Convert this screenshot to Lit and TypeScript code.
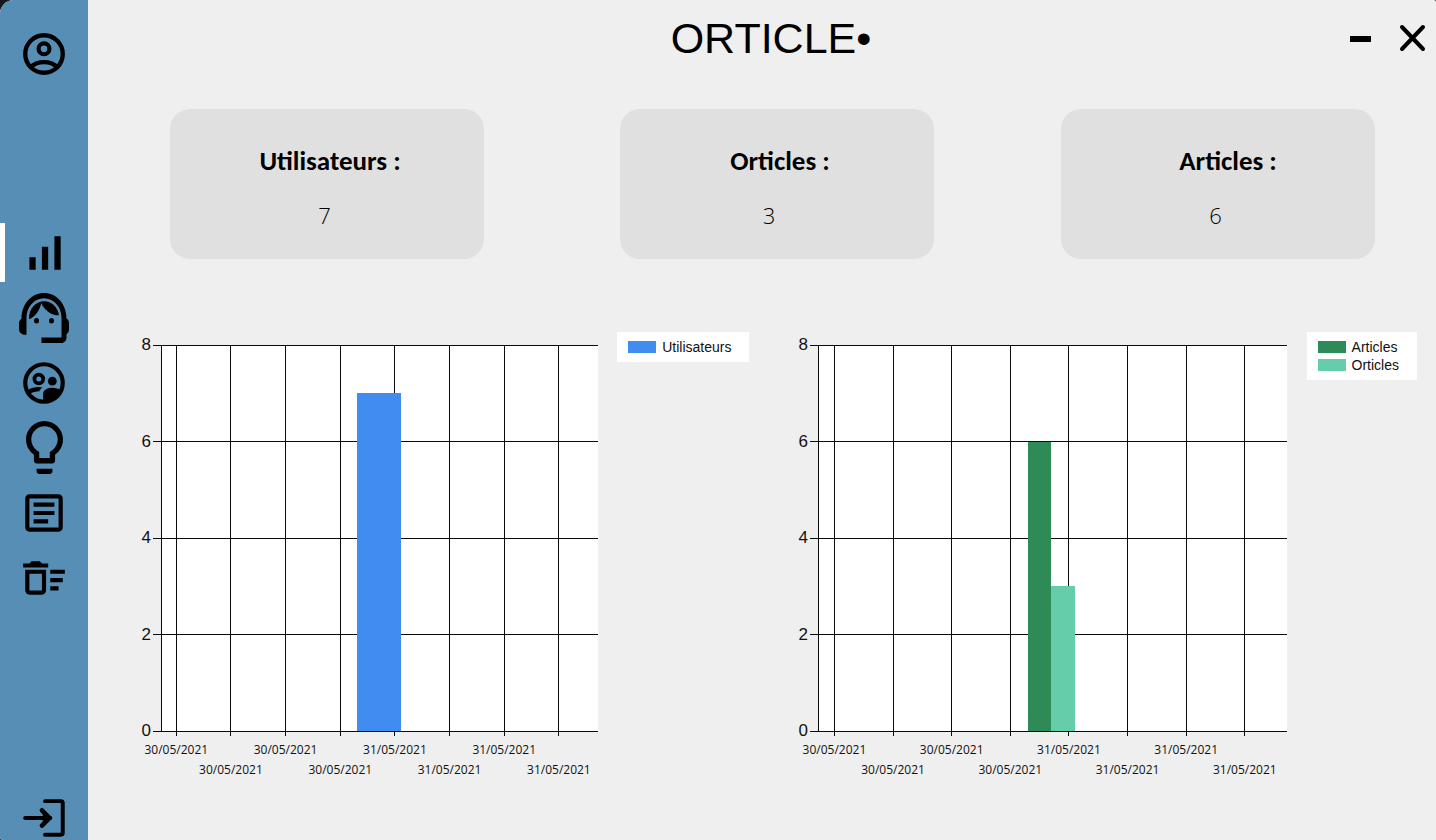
import { LitElement, html, svg, css, nothing } from "lit";
import { customElement, property, state } from "lit/decorators.js";
import { classMap } from "lit/directives/class-map.js";

interface Series {
  name: string;
  color: string;
  value: number;
}

const DATES = [
  "30/05/2021", "30/05/2021", "30/05/2021", "30/05/2021",
  "31/05/2021", "31/05/2021", "31/05/2021", "31/05/2021",
];

const ICONS = {
  account: svg`
    <circle cx="12" cy="12" r="9" fill="none" stroke="currentColor" stroke-width="2.1"/>
    <circle cx="12" cy="9.5" r="2.6" fill="none" stroke="currentColor" stroke-width="2"/>
    <path d="M5.6 18.2C7.3 16.7 9.5 15.9 12 15.9s4.7 .8 6.4 2.3" fill="none" stroke="currentColor" stroke-width="2"/>`,
  stats: svg`<path d="M17 4h3v16h-3zM5 14h3v6H5zm6-5h3v11h-3z"/>`,
  support: svg`
    <path d="M21 12.22C21 6.73 16.74 3 12 3c-4.69 0-9 3.65-9 9.28C2.4 12.62 2 13.26 2 14v2c0 1.1.9 2 2 2h1v-6.1c0-3.87 3.13-7 7-7s7 3.13 7 7V19h-8v2h8c1.1 0 2-.9 2-2v-1.22c.59-.31 1-.92 1-1.64v-2.3c0-.7-.41-1.31-1-1.62z"/>
    <circle cx="9" cy="13" r="1"/><circle cx="15" cy="13" r="1"/>
    <path d="M18 11.03C17.52 8.18 15.04 6 12.05 6c-3.03 0-6.29 2.51-6.03 6.45 2.47-1.01 4.33-3.21 4.86-5.89 1.31 2.63 4 4.44 7.12 4.47z"/>`,
  users: svg`
    <circle cx="12" cy="12" r="9" fill="none" stroke="currentColor" stroke-width="2"/>
    <circle cx="9.5" cy="10.1" r="2.1" fill="none" stroke="currentColor" stroke-width="1.8"/>
    <circle cx="16" cy="11.1" r="2.1"/>
    <path d="M4 15.6C5.7 14.3 7.6 13.9 9.6 13.9c.6 0 1.1.1 1.7.2-.8.5-1.3 1.1-1.6 1.8-1.6 0-3.2.4-4.5 1.4z"/>
    <path d="M11.6 21v-3.9c0-1.9 2.5-2.8 4.4-2.8 1.5 0 3.2.4 4.3 1.2-1.4 3.1-4.5 5.5-8.7 5.5z"/>`,
  idea: svg`<path d="M9 21c0 .55.45 1 1 1h4c.55 0 1-.45 1-1v-1H9v1zm3-19C8.14 2 5 5.14 5 9c0 2.38 1.19 4.47 3 5.74V17c0 .55.45 1 1 1h6c.55 0 1-.45 1-1v-2.26c1.81-1.27 3-3.36 3-5.74 0-3.86-3.14-7-7-7zm2.85 11.1l-.85.6V16h-4v-2.3l-.85-.6C7.8 12.16 7 10.63 7 9c0-2.76 2.24-5 5-5s5 2.24 5 5c0 1.63-.8 3.16-2.15 4.1z"/>`,
  article: svg`<path d="M19 5v14H5V5h14m0-2H5c-1.1 0-2 .9-2 2v14c0 1.1.9 2 2 2h14c1.1 0 2-.9 2-2V5c0-1.1-.9-2-2-2zM14 17H7v-2h7v2zm3-4H7v-2h10v2zm0-4H7V7h10v2z"/>`,
  trash: svg`<path d="M15 16h4v2h-4zm0-8h7v2h-7zm0 4h6v2h-6zM3 18c0 1.1.9 2 2 2h6c1.1 0 2-.9 2-2V8H3v10zm2-8h6v8H5v-8zm5-6H6L5 5H2v2h12V5h-3z"/>`,
  logout: svg`
    <path d="M12.5 3.9h7.6q.9 0 .9.9v14.3q0 .9-.9.9h-7.6" fill="none" stroke="currentColor" stroke-width="1.9" stroke-linecap="round"/>
    <path d="M3 12h12" fill="none" stroke="currentColor" stroke-width="2" stroke-linecap="round"/>
    <path d="M11 8.3l3.7 3.7-3.7 3.7" fill="none" stroke="currentColor" stroke-width="2.2" stroke-linecap="round" stroke-linejoin="round"/>
    <path d="M11.4 8.8l3.2 3.2-3.2 3.2z"/>`,
};

@customElement("orticle-sidebar")
class OrticleSidebar extends LitElement {
  @state() private active = "Statistiques";

  static styles = css`
    :host {
      display: flex;
      flex-direction: column;
      box-sizing: border-box;
      padding-top: 21px;
      background: #568eb6;
      color: #000;
    }
    .item {
      display: flex;
      align-items: center;
      justify-content: center;
      box-sizing: border-box;
      width: 100%;
      height: 65px;
      padding: 0;
      border: 0;
      background: none;
      color: inherit;
      cursor: pointer;
    }
    .menu {
      margin-top: 134px;
    }
    .slot {
      display: grid;
      grid-template-columns: 5px 1fr 5px;
      align-items: center;
    }
    .marker {
      height: 59px;
    }
    .marker.on {
      background: #fff;
    }
    .exit {
      height: 44px;
      margin-top: auto;
    }
    svg {
      display: block;
      flex: none;
      width: 50px;
      height: 50px;
      fill: currentColor;
    }
    .idea {
      width: 37px;
      height: 53px;
    }
  `;

  private menu = [
    { label: "Statistiques", icon: ICONS.stats, box: "0 0 24 24", kind: "" },
    { label: "Support", icon: ICONS.support, box: "2 3 20 18", kind: "" },
    { label: "Utilisateurs", icon: ICONS.users, box: "0 0 24 24", kind: "" },
    { label: "Orticles", icon: ICONS.idea, box: "5 2 14 20", kind: "idea" },
    { label: "Articles", icon: ICONS.article, box: "0 0 24 24", kind: "" },
    { label: "Corbeille", icon: ICONS.trash, box: "0 0 24 24", kind: "" },
  ];

  render() {
    return html`
      <button class="item" aria-label="Compte"><svg viewBox="0 0 24 24">${ICONS.account}</svg></button>
      <nav class="menu">
        ${this.menu.map(
          (m) => html`<div class="slot">
            <span class=${classMap({ marker: true, on: m.label === this.active })}></span>
            <button class="item" aria-label=${m.label} @click=${() => (this.active = m.label)}>
              <svg class=${m.kind || nothing} viewBox=${m.box} preserveAspectRatio="none">${m.icon}</svg>
            </button>
          </div>`
        )}
      </nav>
      <button class="item exit" aria-label="Déconnexion"><svg viewBox="0 0 24 24">${ICONS.logout}</svg></button>
    `;
  }
}

@customElement("orticle-chart")
class OrticleChart extends LitElement {
  @property({ attribute: false }) series: Series[] = [];
  @property({ type: Number }) first = 0;
  @property({ type: Number }) step = 0;
  @property({ type: Number }) barStart = 0;
  @property({ type: Number }) barWidth = 0;

  static styles = css`
    :host {
      display: flex;
      align-items: flex-start;
      gap: 19px;
      min-width: 0;
      color: #111;
    }
    .plot {
      flex: 1;
      min-width: 0;
      height: 386px;
      margin: 13px 0 48px 20px;
      overflow: visible;
    }
    .area {
      fill: #fff;
    }
    .line {
      stroke: #0a0a0a;
      stroke-width: 1;
      shape-rendering: crispEdges;
    }
    .bar {
      shape-rendering: crispEdges;
    }
    .value {
      font: 17px "Liberation Sans", Arial, sans-serif;
      text-anchor: end;
      fill: currentColor;
    }
    .date {
      font: 12px "Open Sans", "Noto Sans", sans-serif;
      text-anchor: middle;
      fill: currentColor;
    }
    .legend {
      display: flex;
      flex-direction: column;
      box-sizing: border-box;
      margin: 0;
      padding: 6px 18px 6px 11px;
      list-style: none;
      background: #fff;
      font: 14px/18px "Liberation Sans", Arial, sans-serif;
    }
    .entry {
      display: flex;
      align-items: center;
      gap: 6px;
    }
    .swatch {
      width: 28px;
      height: 12px;
    }
  `;

  render() {
    const height = 386;
    const max = 8;
    const y = (v: number) => height - (v * height) / max;
    const x = (i: number) => this.first + i * this.step;
    return html`
      <svg class="plot" role="img" aria-label=${this.series.map((s) => s.name).join(", ")}>
        <rect class="area" width="100%" height=${height}></rect>
        ${DATES.map((_, i) => svg`<line class="line" x1="${x(i)}%" x2="${x(i)}%" y1="0" y2=${height + 5}></line>`)}
        ${[0, 2, 4, 6, 8].map(
          (v) => svg`
            <line class="line" x1="-8" x2="100%" y1=${y(v)} y2=${y(v)}></line>
            <text class="value" x="-10" y=${y(v) + 5}>${v}</text>`
        )}
        <line class="line" x1="0" x2="0" y1="0" y2=${height}></line>
        ${this.series.map(
          (s, i) => svg`<rect class="bar" x="${this.barStart + i * this.barWidth}%" y=${y(s.value)}
            width="${this.barWidth}%" height=${height - y(s.value)} fill=${s.color}></rect>`
        )}
        ${DATES.map((d, i) => svg`<text class="date" x="${x(i)}%" y=${height + (i % 2 ? 43 : 23)}>${d}</text>`)}
      </svg>
      <ul class="legend">
        ${this.series.map(
          (s) => html`<li class="entry"><span class="swatch" style="background:${s.color}"></span>${s.name}</li>`
        )}
      </ul>
    `;
  }
}

@customElement("app-root")
class AppRoot extends LitElement {
  static styles = css`
    :host {
      display: block;
      background: #17181c;
      color: #000;
    }
    .window {
      display: grid;
      grid-template-columns: 88px minmax(0, 1fr);
      min-height: 100vh;
      overflow: hidden;
      border-radius: 14px 2px 0 3px;
      background: #efefef;
    }
    .header {
      display: grid;
      grid-template-columns: 1fr auto 1fr;
      align-items: center;
      height: 75px;
      padding: 0 10px 0 28px;
    }
    .title {
      grid-column: 2;
      margin: 0;
      font: 43px/48px "Liberation Sans", Arial, sans-serif;
    }
    .controls {
      display: flex;
      justify-content: flex-end;
      gap: 24px;
    }
    .control {
      display: flex;
      padding: 0;
      border: 0;
      background: none;
      color: inherit;
      cursor: pointer;
    }
    .glyph {
      width: 28px;
      height: 28px;
      fill: none;
      stroke: currentColor;
    }
    .cards {
      display: grid;
      grid-template-columns: 314fr 136fr 314fr 127fr 314fr;
      padding: 34px 61px 0 82px;
    }
    .card {
      display: flex;
      flex-direction: column;
      align-items: center;
      gap: 22px;
      box-sizing: border-box;
      height: 150px;
      padding-top: 36px;
      border-radius: 20px;
      background: #e0e0e0;
    }
    .card:nth-child(2) {
      grid-column: 3;
    }
    .card:nth-child(3) {
      grid-column: 5;
    }
    .name {
      margin: 0;
      padding-left: 6px;
      font: bold 27px/32px Carlito, Lato, sans-serif;
    }
    .count {
      margin: 0;
      padding-right: 5px;
      font: 300 22px/32px "Open Sans", "Noto Sans", sans-serif;
    }
    .name-far {
      padding-left: 20px;
    }
    .count-near {
      padding-right: 16px;
    }
    .charts {
      display: grid;
      grid-template-columns: 608fr 618fr;
      gap: 49px;
      padding: 73px 19px 0 53px;
    }
  `;

  private users: Series[] = [{ name: "Utilisateurs", color: "#418cf0", value: 7 }];
  private texts: Series[] = [
    { name: "Articles", color: "#2e8b57", value: 6 },
    { name: "Orticles", color: "#66cdaa", value: 3 },
  ];

  render() {
    return html`
      <div class="window">
        <orticle-sidebar></orticle-sidebar>
        <main>
          <header class="header">
            <h1 class="title">ORTICLE•</h1>
            <div class="controls">
              <button class="control" aria-label="Réduire">
                <svg class="glyph" viewBox="0 0 28 28"><path d="M4 15h21" stroke-width="6"></path></svg>
              </button>
              <button class="control" aria-label="Fermer">
                <svg class="glyph" viewBox="0 0 28 28"><path d="M4 3l21 22M25 3L4 25" stroke-width="4" stroke-linecap="round"></path></svg>
              </button>
            </div>
          </header>
          <section class="cards">
            <article class="card"><h2 class="name">Utilisateurs :</h2><p class="count">7</p></article>
            <article class="card"><h2 class="name">Orticles :</h2><p class="count count-near">3</p></article>
            <article class="card"><h2 class="name name-far">Articles :</h2><p class="count">6</p></article>
          </section>
          <section class="charts">
            <orticle-chart .series=${this.users} .first=${3.5} .step=${12.5} .barStart=${44.9} .barWidth=${10}></orticle-chart>
            <orticle-chart .series=${this.texts} .first=${3.5} .step=${12.5} .barStart=${44.7} .barWidth=${5.05}></orticle-chart>
          </section>
        </main>
      </div>
    `;
  }
}
